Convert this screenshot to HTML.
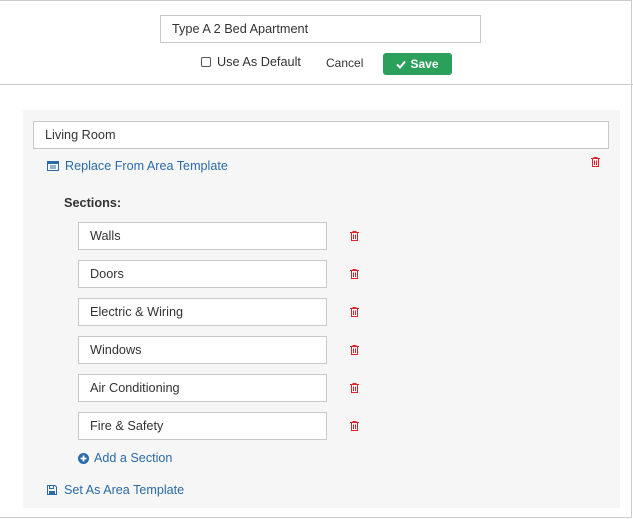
<!DOCTYPE html>
<html><head><style>
*{box-sizing:border-box;margin:0;padding:0}
body{width:633px;height:519px;background:#fff;font-family:"Liberation Sans",sans-serif;font-size:13px;color:#333;position:relative;overflow:hidden}
.frame{position:absolute;left:0;top:0;width:632px;height:518px;border:1px solid #ccc;border-left:none}
.abs{position:absolute}
.inp{position:absolute;background:#fff;border:1px solid #c8c8c8;padding-left:11px;line-height:27px;font-size:12.7px;color:#333}
.link{position:absolute;color:#2a6aa8;font-size:12.6px}
.trash{position:absolute;width:9px;height:10px}
</style></head><body>
<div class="frame"></div>
<div class="inp" style="left:160px;top:15px;width:321px;height:28px;line-height:27px">Type A 2 Bed Apartment</div>
<div class="abs" style="left:201px;top:57px;width:10px;height:10px;border:1px solid #555;border-radius:2px"></div>
<div class="abs" style="left:217px;top:55px;font-size:12.7px;color:#333">Use As Default</div>
<div class="abs" style="left:326px;top:56px;font-size:12px;color:#333">Cancel</div>
<div class="abs" style="left:383px;top:53px;width:69px;height:22px;background:#2ba05a;border-radius:3px;color:#fff;font-size:12px;font-weight:bold;line-height:22px;text-align:center"><svg width="10" height="9" viewBox="0 0 10 9" style="vertical-align:-1px;margin-right:4px"><path d="M1 4.5L4 7.5L9 1.5" stroke="#fff" stroke-width="2" fill="none"/></svg>Save</div>
<div class="abs" style="left:0;top:84px;width:633px;height:1px;background:#ccc"></div>
<div class="abs" style="left:23px;top:110px;width:597px;height:398px;background:#f6f6f6"></div>
<div class="inp" style="left:33px;top:121px;width:576px;height:28px">Living Room</div>
<svg class="abs" style="left:47px;top:161px" width="12" height="10" viewBox="0 0 12 10"><rect x="0.5" y="0.5" width="11" height="9" fill="none" stroke="#2a6aa8"/><rect x="0.5" y="0.5" width="11" height="2.5" fill="#2a6aa8"/><path d="M3 5h6M3 7h6" stroke="#2a6aa8"/></svg>
<div class="link" style="left:65px;top:159px">Replace From Area Template</div>
<svg class="trash" style="left:591px;top:157px" viewBox="0 0 9 10"><path d="M0 1.5h9M3 1.5V0.5h3v1M1.5 2v7.5h6V2M3.5 3.5v4.5M5.5 3.5v4.5" stroke="#e0232a" fill="none"/></svg>
<div class="abs" style="left:64px;top:196px;font-weight:bold;font-size:12.7px;color:#333">Sections:</div>
<div class="inp" style="left:78px;top:222px;width:249px;height:28px">Walls</div>
<div class="inp" style="left:78px;top:260px;width:249px;height:28px">Doors</div>
<div class="inp" style="left:78px;top:298px;width:249px;height:28px">Electric &amp; Wiring</div>
<div class="inp" style="left:78px;top:336px;width:249px;height:28px">Windows</div>
<div class="inp" style="left:78px;top:374px;width:249px;height:28px">Air Conditioning</div>
<div class="inp" style="left:78px;top:412px;width:249px;height:28px">Fire &amp; Safety</div>
<svg class="trash" style="left:350px;top:231px" viewBox="0 0 9 10"><path d="M0 1.5h9M3 1.5V0.5h3v1M1.5 2v7.5h6V2M3.5 3.5v4.5M5.5 3.5v4.5" stroke="#e0232a" fill="none"/></svg>
<svg class="trash" style="left:350px;top:269px" viewBox="0 0 9 10"><path d="M0 1.5h9M3 1.5V0.5h3v1M1.5 2v7.5h6V2M3.5 3.5v4.5M5.5 3.5v4.5" stroke="#e0232a" fill="none"/></svg>
<svg class="trash" style="left:350px;top:307px" viewBox="0 0 9 10"><path d="M0 1.5h9M3 1.5V0.5h3v1M1.5 2v7.5h6V2M3.5 3.5v4.5M5.5 3.5v4.5" stroke="#e0232a" fill="none"/></svg>
<svg class="trash" style="left:350px;top:345px" viewBox="0 0 9 10"><path d="M0 1.5h9M3 1.5V0.5h3v1M1.5 2v7.5h6V2M3.5 3.5v4.5M5.5 3.5v4.5" stroke="#e0232a" fill="none"/></svg>
<svg class="trash" style="left:350px;top:383px" viewBox="0 0 9 10"><path d="M0 1.5h9M3 1.5V0.5h3v1M1.5 2v7.5h6V2M3.5 3.5v4.5M5.5 3.5v4.5" stroke="#e0232a" fill="none"/></svg>
<svg class="trash" style="left:350px;top:421px" viewBox="0 0 9 10"><path d="M0 1.5h9M3 1.5V0.5h3v1M1.5 2v7.5h6V2M3.5 3.5v4.5M5.5 3.5v4.5" stroke="#e0232a" fill="none"/></svg>
<svg class="abs" style="left:78px;top:453px" width="11" height="11" viewBox="0 0 11 11"><circle cx="5.5" cy="5.5" r="5.5" fill="#2a6aa8"/><path d="M5.5 2.5v6M2.5 5.5h6" stroke="#fff" stroke-width="1.8"/></svg>
<div class="link" style="left:94px;top:451px">Add a Section</div>
<svg class="abs" style="left:47px;top:485px" width="10" height="10" viewBox="0 0 10 10"><path d="M0.5 0.5h7.5l1.5 1.5v7.5h-9z" fill="none" stroke="#2a6aa8"/><rect x="2.5" y="0.5" width="4" height="3" fill="none" stroke="#2a6aa8"/><rect x="2" y="6" width="6" height="3.5" fill="#2a6aa8"/></svg>
<div class="link" style="left:64px;top:483px">Set As Area Template</div>
</body></html>
